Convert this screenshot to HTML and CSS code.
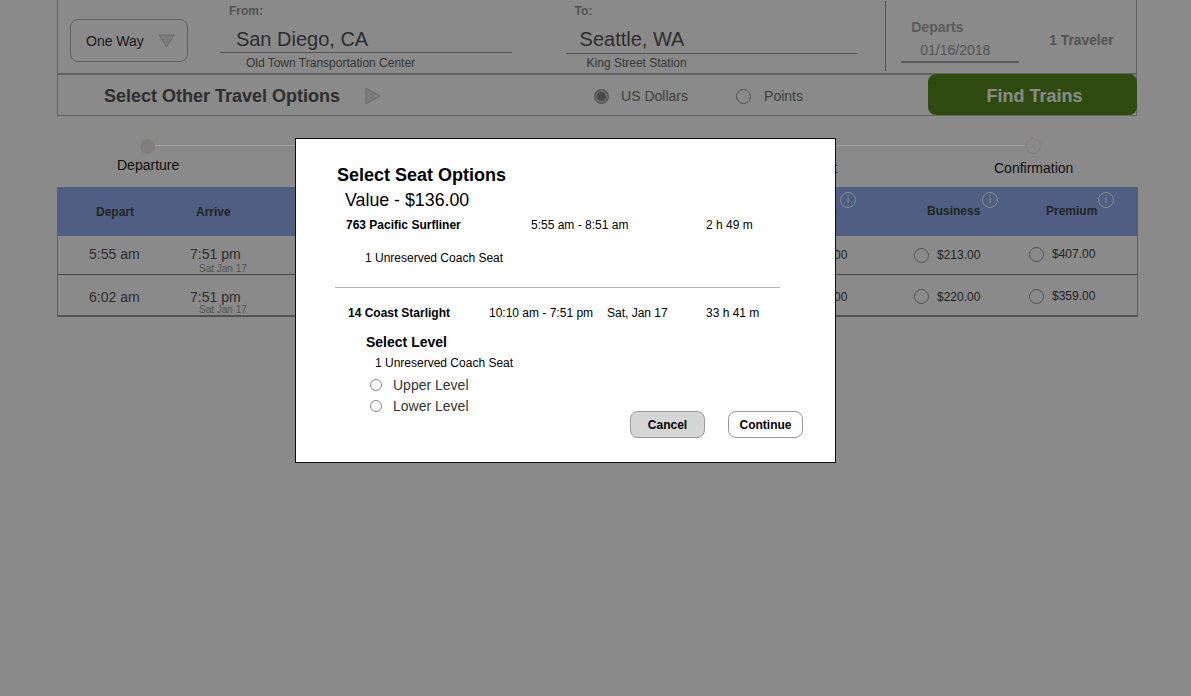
FILE: index.html
```html
<!DOCTYPE html>
<html lang="en">
<head>
    <meta charset="UTF-8">
    <title>Select Seat Options</title>
    <link rel="stylesheet" href="styles.css">
</head>
<body>
    <div class="page">
        <div class="search">
            <div class="search-top">
                <div class="trip-select">
                    <span>One Way</span>
                    <svg width="17" height="14" viewBox="0 0 17 14"><path d="M1 1H16L8.500 13Z" fill="#e6e6e6" stroke="#c4c4c4"/></svg>
                </div>
                <div class="place place-from">
                    <div class="place-label">From:</div>
                    <div class="place-name">San Diego, CA</div>
                    <div class="place-station">Old Town Transportation Center</div>
                </div>
                <div class="place place-to">
                    <div class="place-label">To:</div>
                    <div class="place-name">Seattle, WA</div>
                    <div class="place-station">King Street Station</div>
                </div>
                <div class="trip-info">
                    <div class="departs">
                        <div class="departs-label">Departs</div>
                        <div class="departs-date">01/16/2018</div>
                    </div>
                    <div class="travelers">1 Traveler</div>
                </div>
            </div>
            <div class="search-bottom">
                <div class="other-options">Select Other Travel Options</div>
                <svg class="other-arrow" width="16" height="18" viewBox="0 0 16 18"><path d="M1 1L15 9L1 17Z" fill="#e6e6e6" stroke="#c4c4c4"/></svg>
                <div class="currency currency-usd"><span class="radio radio-on"></span>US Dollars</div>
                <div class="currency currency-points"><span class="radio"></span>Points</div>
                <button class="find-btn">Find Trains</button>
            </div>
        </div>

        <div class="progress">
            <div class="progress-line">
                <span class="dot dot-start"></span>
                <span class="track"></span>
                <span class="dot dot-end"></span>
            </div>
            <div class="progress-labels">
                <span class="step step-first">Departure</span>
                <span class="step step-mid">Payment</span>
                <span class="step step-last">Confirmation</span>
            </div>
        </div>

        <div class="results">
            <div class="row row-head">
                <div class="head-depart">Depart</div>
                <div class="head-arrive">Arrive</div>
                <div class="head-fare head-value">Value<span class="info">i</span></div>
                <div class="head-fare head-business">Business<span class="info">i</span></div>
                <div class="head-fare head-premium">Premium<span class="info">i</span></div>
            </div>
            <div class="row row-train">
                <div class="time">5:55 am</div>
                <div class="arrive"><div class="time">7:51 pm</div><div class="arrive-date">Sat Jan 17</div></div>
                <div class="fare fare-value"><span class="radio"></span>$136.00</div>
                <div class="fare"><span class="radio"></span>$213.00</div>
                <div class="fare fare-premium"><span class="radio"></span>$407.00</div>
            </div>
            <div class="row row-train row-last">
                <div class="time">6:02 am</div>
                <div class="arrive"><div class="time">7:51 pm</div><div class="arrive-date">Sat Jan 17</div></div>
                <div class="fare fare-value"><span class="radio"></span>$178.00</div>
                <div class="fare"><span class="radio"></span>$220.00</div>
                <div class="fare fare-premium"><span class="radio"></span>$359.00</div>
            </div>
        </div>
    </div>

    <div class="overlay"></div>

    <div class="modal">
        <h2 class="modal-title">Select Seat Options</h2>
        <div class="modal-fare">Value - $136.00</div>
        <div class="leg leg-one">
            <span class="leg-name">763 Pacific Surfliner</span>
            <span class="leg-time">5:55 am - 8:51 am</span>
            <span class="leg-length">2 h 49 m</span>
        </div>
        <div class="seat seat-one">1 Unreserved Coach Seat</div>
        <hr class="modal-rule">
        <div class="leg leg-two">
            <span class="leg-name">14 Coast Starlight</span>
            <span class="leg-time">10:10 am - 7:51 pm</span>
            <span class="leg-day">Sat, Jan 17</span>
            <span class="leg-length">33 h 41 m</span>
        </div>
        <div class="modal-bottom">
            <div class="levels">
                <div class="levels-title">Select Level</div>
                <div class="seat seat-two">1 Unreserved Coach Seat</div>
                <div class="level"><span class="radio radio-small"></span>Upper Level</div>
                <div class="level"><span class="radio radio-small"></span>Lower Level</div>
            </div>
            <div class="modal-actions">
                <button class="modal-btn modal-btn-cancel">Cancel</button>
                <button class="modal-btn">Continue</button>
            </div>
        </div>
    </div>
</body>
</html>
```

FILE: styles.css
```css
* {
    box-sizing: border-box;
}
html, body {
    height: 100%;
}
body {
    margin: 0;
    background-color: #fff;
    font-family: "Liberation Sans", Arial, sans-serif;
    color: #555;
    overflow: hidden;
}
.page {
    width: 1081px;
    margin-left: 57px;
}
.overlay {
    position: fixed;
    top: 0;
    left: 0;
    right: 0;
    bottom: 0;
    background-color: rgba(0, 0, 0, 0.46);
}

/* search box */
.search {
    width: 1080px;
    height: 116px;
    border: 1px solid #b5b5b5;
    border-top: none;
}
.search-top {
    display: flex;
    height: 75px;
    border-bottom: 2px solid #b5b5b5;
}
.trip-select {
    display: flex;
    align-items: center;
    justify-content: space-between;
    width: 118px;
    height: 43px;
    margin: 19px 0 0 12px;
    padding: 0 12px 0 15px;
    border: 1px solid #b0b0b0;
    border-radius: 8px;
    font-size: 14px;
    color: #333;
}
.place-from {
    width: 292px;
    margin-left: 32px;
}
.place-to {
    width: 292px;
    margin-left: 54px;
}
.place-label {
    height: 22px;
    padding: 4px 0 0 9px;
    font-size: 12px;
    font-weight: bold;
    color: #999;
}
.place-name {
    height: 31px;
    padding: 4px 0 0 16px;
    border-bottom: 1px solid #999;
    font-size: 20px;
    line-height: 26px;
}
.place-to .place-name {
    height: 32px;
    padding-left: 14px;
}
.place-station {
    padding: 3px 0 0 26px;
    font-size: 12px;
    line-height: 14px;
    color: #666;
}
.place-to .place-station {
    padding: 2px 0 0 21px;
}
.trip-info {
    display: flex;
    width: 251px;
    height: 70px;
    margin: 1px 0 0 28px;
    padding-left: 15px;
    border-left: 1px solid #999;
}
.departs {
    width: 118px;
}
.departs-label {
    padding: 19px 0 0 10px;
    font-size: 14px;
    line-height: 15px;
    font-weight: bold;
    color: #a8a8a8;
}
.departs-date {
    height: 28px;
    padding: 8px 0 0 19px;
    border-bottom: 2px solid #a8a8a8;
    font-size: 14px;
    line-height: 15px;
    color: #999;
}
.travelers {
    margin: 32px 0 0 30px;
    font-size: 13.800px;
    line-height: 15px;
    font-weight: bold;
    color: #999;
}
.search-bottom {
    display: flex;
    align-items: center;
    height: 40px;
    padding-top: 2px;
}
.search-bottom > * {
    flex: none;
}
.other-options {
    margin-left: 46px;
    font-size: 18px;
    font-weight: bold;
    white-space: nowrap;
}
.other-arrow {
    margin-left: 25px;
}
.currency {
    display: flex;
    align-items: center;
    font-size: 14px;
    color: #777;
}
.currency-usd {
    width: 142px;
    margin-left: 213px;
}
.currency-points {
    width: 192px;
}
.currency .radio {
    margin-right: 12px;
}
.currency-points .radio {
    margin-right: 13px;
}
.find-btn {
    align-self: flex-start;
    width: 209px;
    height: 41px;
    margin: -3px -1px 0 0;
    padding: 4px 0 0 4px;
    border: none;
    border-radius: 8px;
    background-color: #578a1a;
    color: #fff;
    font-family: inherit;
    font-size: 18px;
    font-weight: bold;
}

/* radios */
.radio {
    display: inline-block;
    flex: none;
    width: 15px;
    height: 15px;
    border: 1px solid #999;
    border-radius: 50%;
    background-color: #fff;
}
.radio-on {
    border-color: #999;
    background-color: #888;
    box-shadow: inset 0 0 0 2px #ccc;
}
.radio-small {
    width: 12px;
    height: 12px;
    margin-right: 11px;
    border-color: #888;
}

/* progress */
.progress {
    width: 1081px;
    height: 71px;
    padding-top: 22px;
}
.progress-line {
    display: flex;
    align-items: center;
    height: 16px;
    padding-left: 83px;
}
.dot {
    flex: none;
    width: 15px;
    height: 15px;
    border-radius: 50%;
    background-color: #f0e8e8;
}
.dot-end {
    width: 16px;
    height: 16px;
    background-color: #fff;
    border: 1px solid #f0e0e0;
}
.track {
    position: relative;
    z-index: 1;
    flex: none;
    width: 870px;
    height: 1px;
    margin-top: -2px;
    background-color: #a0a0a0;
}
.progress-labels {
    position: relative;
    height: 33px;
    font-size: 14px;
    color: #222;
}
.step {
    position: absolute;
    line-height: 16px;
}
.step-first {
    top: 3px;
    left: 60px;
}
.step-mid {
    top: 6px;
    left: 725px;
}
.step-last {
    top: 6px;
    left: 937px;
}

/* results table */
.results {
    width: 1081px;
    border-right: 1px solid #aaa;
    border-left: 1px solid #aaa;
    border-bottom: 2px solid #999;
}
.row {
    display: grid;
    grid-template-columns: 132px 610px 114px 115px 1fr;
}
.row-head {
    height: 49px;
    margin: 0 -1px;
    background-color: #92aef0;
    font-size: 12px;
    font-weight: bold;
    color: #444;
}
.row-head > div {
    padding-top: 17px;
    line-height: 14px;
}
.row-head > .head-depart,
.row-head > .head-arrive {
    padding-top: 18px;
}
.head-depart {
    padding-left: 39px;
}
.head-arrive {
    padding-left: 7px;
}
.head-fare {
    position: relative;
}
.head-value {
    padding-left: 6px;
}
.head-business {
    padding-left: 14px;
}
.head-premium {
    padding-left: 18px;
}
.info {
    position: absolute;
    top: 5px;
    left: 70px;
    width: 16px;
    height: 16px;
    border: 1.500px solid #fff;
    border-radius: 50%;
    color: #fff;
    font-size: 11px;
    font-weight: normal;
    line-height: 13px;
    text-align: center;
}
.head-value .info {
    left: 41px;
}
.head-business .info {
    left: 69px;
}
.row-train {
    height: 39px;
    border-bottom: 1px solid #888;
    align-items: center;
}
.row-last {
    height: 40px;
    border-bottom: none;
}
.row-train .time {
    font-size: 14px;
    line-height: 16px;
}
.row-train > .time {
    padding: 0 0 3px 31px;
}
.row-last > .time {
    padding: 4px 0 0 31px;
}
.arrive {
    position: relative;
    padding-bottom: 3px;
}
.row-last .arrive {
    padding: 4px 0 0;
}
.arrive-date {
    position: absolute;
    top: 17px;
    left: 9px;
    font-size: 10px;
    line-height: 11px;
    color: #999;
}
.row-last .arrive-date {
    top: 19px;
}
.fare {
    display: flex;
    align-items: center;
    font-size: 12px;
    color: #444;
}
.row-last .fare {
    padding-top: 3px;
}
.fare .radio {
    margin-right: 8px;
}
.fare-value {
    margin-left: -19px;
}
.fare-premium {
    padding-bottom: 2px;
}
.row-last .fare-premium {
    padding: 2px 0 0;
}

/* modal */
.modal {
    position: fixed;
    z-index: 2;
    top: 138px;
    left: 295px;
    width: 541px;
    height: 325px;
    padding: 26px 0 0 40px;
    border: 1px solid #111;
    background-color: #fff;
    color: #000;
}
.modal-title {
    margin: 0 0 0 1px;
    font-size: 18px;
    line-height: 20px;
}
.modal-fare {
    margin: 5px 0 0 9px;
    font-size: 17.800px;
    line-height: 20px;
}
.leg {
    position: relative;
    height: 14px;
    font-size: 12px;
    line-height: 14px;
}
.leg span {
    position: absolute;
    top: 0;
}
.leg-one {
    margin-top: 8px;
}
.leg-two {
    margin-top: 18px;
}
.leg-one .leg-name {
    left: 10px;
}
.leg-one .leg-time {
    left: 195px;
}
.leg-two .leg-name {
    left: 12px;
}
.leg-two .leg-time {
    left: 153px;
}
.leg-name {
    font-weight: bold;
}
.leg-day {
    left: 271px;
}
.leg-length {
    left: 370px;
}
.seat {
    font-size: 12px;
    line-height: 14px;
}
.seat-one {
    margin: 19px 0 0 29px;
}
.seat-two {
    margin: 6px 0 0 9px;
}
.modal-rule {
    width: 445px;
    height: 1px;
    margin: 22px 0 0 -1px;
    border: none;
    background-color: #b5b5b5;
}
.modal-bottom {
    display: flex;
    align-items: flex-end;
    margin-top: 14px;
}
.levels {
    width: 264px;
    margin-left: 30px;
}
.levels-title {
    font-size: 14px;
    line-height: 16px;
    font-weight: bold;
}
.level {
    display: flex;
    align-items: center;
    height: 21px;
    padding-left: 4px;
    font-size: 14px;
    color: #333;
}
.seat-two + .level {
    margin-top: 4px;
}
.modal-actions {
    display: flex;
    gap: 23px;
    margin-bottom: -22px;
}
.modal-btn {
    width: 75px;
    height: 27px;
    padding: 0;
    border: 1px solid #999;
    border-radius: 8px;
    background-color: #fff;
    color: #000;
    font-family: inherit;
    font-size: 12px;
    font-weight: bold;
}
.modal-btn-cancel {
    background-color: #d6d6d6;
}
```
